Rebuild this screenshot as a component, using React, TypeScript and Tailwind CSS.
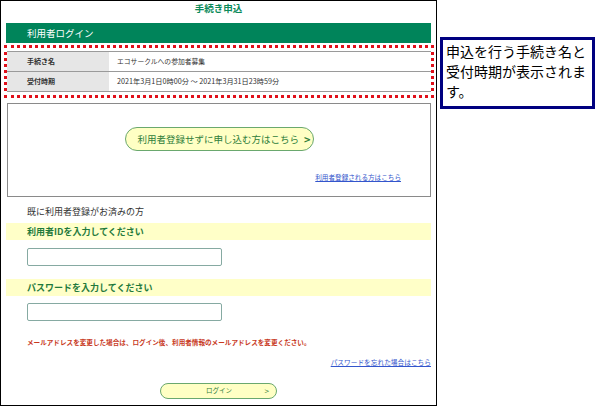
export default function App() {
  const font = { fontFamily: '"Noto Sans CJK JP", "Noto Sans", sans-serif' };

  return (
    <div className="flex w-[595px] h-[406px] bg-white" style={font}>
      {/* captured page */}
      <div className="w-[437px] h-[406px] border border-black flex flex-col">
        <div className="h-[22px] pt-[1px] text-center text-[9.5px] leading-[12px] font-bold text-[#0a8a5a]">
          手続き申込
        </div>

        <div className="mx-[5px] h-[20px] bg-[#00845a] flex items-center pl-[21px] text-[9.5px] text-white">
          利用者ログイン
        </div>

        <div className="mt-[2px] ml-[3px] mr-[2px] border-[3px] border-dotted border-[#e0101a] py-[3px]">
          <div className="border-t border-b border-[#9a9a9a] text-[6.8px] text-[#333]">
            <div className="flex h-[19px]">
              <div className="w-[102px] bg-[#e6e6e6] flex items-center pl-[20px] font-bold text-[7px]">手続き名</div>
              <div className="flex items-center pl-[8px]">エコサークルへの参加者募集</div>
            </div>
            <div className="flex h-[20px] border-t border-[#9a9a9a]">
              <div className="w-[102px] bg-[#e6e6e6] flex items-center pl-[20px] font-bold text-[7px]">受付時期</div>
              <div className="flex items-center pl-[8px] text-[7.2px]">2021年3月1日0時00分 ～ 2021年3月31日23時59分</div>
            </div>
          </div>
        </div>

        <div className="mt-[5px] ml-[6px] mr-[5px] h-[94px] border border-[#8a8a8a] flex flex-col">
          <button className="mt-[23px] mx-auto w-[189px] h-[24px] rounded-full border border-[#6aa86e] bg-[#ffffc4] text-[9.5px] text-[#2e7d3a] flex items-center justify-center gap-[5px] pl-[10px] whitespace-nowrap">
            <span>利用者登録せずに申し込む方はこちら</span>
            <span className="font-bold text-[11px]">&gt;</span>
          </button>
          <div className="mt-[21px] pr-[29px] text-right text-[6.6px] leading-[10px] text-[#3355cc] underline">
            利用者登録される方はこちら
          </div>
        </div>

        <div className="mt-[8px] pl-[26px] text-[9px] leading-[14px] text-[#333]">既に利用者登録がお済みの方</div>

        <div className="mt-[4px] mx-[5px] h-[17px] bg-[#ffffc8] flex items-center pl-[21px] text-[9px] font-bold text-[#1f7a3c]">
          利用者IDを入力してください
        </div>
        <div className="mt-[8px] ml-[26px] w-[195px] h-[18px] border border-[#86aaa2] rounded-[2px] bg-white" />

        <div className="mt-[13px] mx-[5px] h-[17px] bg-[#ffffc8] flex items-center pl-[21px] text-[9px] font-bold text-[#1f7a3c]">
          パスワードを入力してください
        </div>
        <div className="mt-[7px] ml-[26px] w-[195px] h-[18px] border border-[#86aaa2] rounded-[2px] bg-white" />

        <div className="mt-[16px] pl-[26px] text-[6.6px] leading-[10px] font-bold text-[#c83a1e]">
          メールアドレスを変更した場合は、ログイン後、利用者情報のメールアドレスを変更ください。
        </div>

        <div className="mt-[10px] pr-[5px] text-right text-[6.7px] leading-[10px] text-[#3355cc] underline">
          パスワードを忘れた場合はこちら
        </div>

        <button className="mt-[16px] ml-[159px] w-[117px] h-[16px] rounded-full border border-[#6aa86e] bg-[#ffffc4] text-[6.5px] text-[#2e7d3a] flex items-center">
          <span className="ml-[45px]">ログイン</span>
          <span className="ml-auto mr-[7px] text-[8px]">&gt;</span>
        </button>
      </div>

      {/* callout */}
      <div className="ml-[3px] mt-[37px] w-[155px] h-[72px] border-[3px] border-[#000080] bg-white pl-[3px] pt-[1px] text-[14px] leading-[20px] text-black whitespace-nowrap">
        申込を行う手続き名と
        <br />
        受付時期が表示されま
        <br />
        す。
      </div>
    </div>
  );
}
